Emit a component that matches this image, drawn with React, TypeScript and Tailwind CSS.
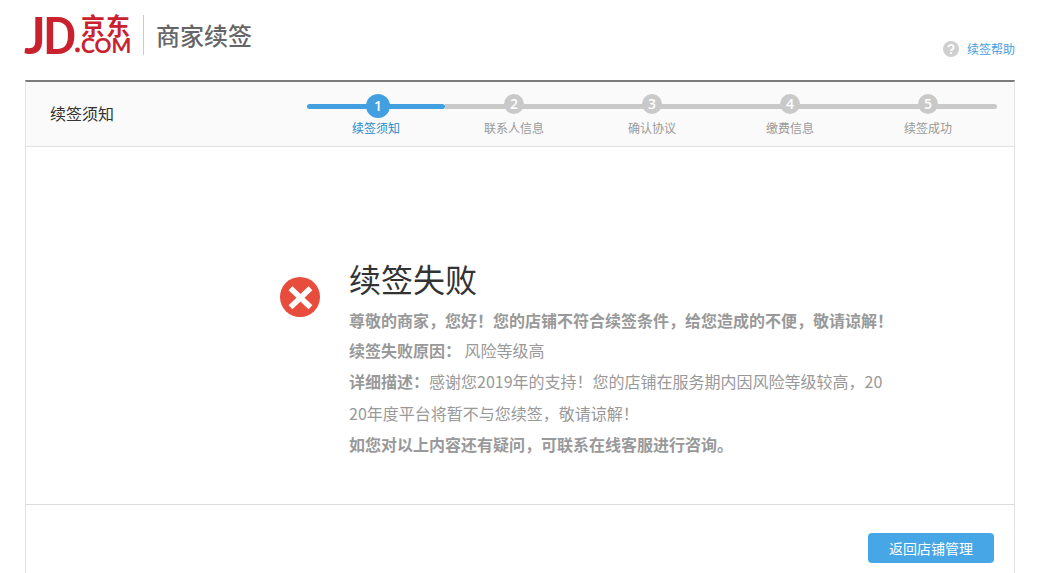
import * as React from 'react';
import clsx from 'clsx';

const steps = ['续签须知', '联系人信息', '确认协议', '缴费信息', '续签成功'];

function Logo() {
    return (
        <svg width="108" height="42" viewBox="0 0 108 42" role="img" aria-label="JD.COM 京东" className="shrink-0 overflow-visible fill-[#c9222e]">
            <text x="-1" y="39" fontFamily="Lato, sans-serif" fontSize="51" fontWeight="700">J</text>
            <text x="18" y="39" fontFamily="Roboto, sans-serif" fontSize="52" fontWeight="500">D</text>
            <circle cx="52.500" cy="35" r="2.400" />
            <text x="56" y="20" fontFamily="'Noto Sans CJK SC', sans-serif" fontSize="24" fontWeight="700">京</text>
            <text x="81" y="20" fontFamily="'Noto Sans CJK SC', sans-serif" fontSize="24" fontWeight="700">东</text>
            <text x="56" y="38" fontFamily="Lato, sans-serif" fontSize="21" fontWeight="700">COM</text>
        </svg>
    );
}

function HelpIcon() {
    return (
        <svg width="16" height="16" viewBox="0 0 16 16" aria-hidden="true">
            <circle cx="8" cy="8" r="8" fill="#cfcfcf" />
            <path d="M5.4 6.3a2.6 2.4 0 1 1 4 2C8.500 8.900 8 9.200 8 10.100" fill="none" stroke="#fff" strokeWidth="1.900" />
            <rect x="7" y="11.200" width="2" height="2" fill="#fff" />
        </svg>
    );
}

function FailIcon() {
    return (
        <svg width="40" height="40" viewBox="0 0 40 40" aria-hidden="true" className="mt-6 shrink-0">
            <circle cx="20" cy="20" r="20" fill="#e84c3d" />
            <path d="M10.500 11.200l20 19M30.500 11.200l-20 19" stroke="#fff" strokeWidth="5.600" />
        </svg>
    );
}

function Steps({ current }: { current: number }) {
    return (
        <ol className="grid w-[690px] grid-cols-5">
            {steps.map((label, i) => {
                const active = i === current;
                return (
                    <li key={label} className="relative flex h-12 flex-col items-center">
                        <span
                            className={clsx(
                                'absolute top-2.5 left-0 h-[5px] w-full',
                                i === 0 && 'rounded-l-sm',
                                i === steps.length - 1 && 'rounded-r-sm',
                                active ? 'rounded-r-sm bg-[#43a0e0]' : 'bg-[#c9c9c9]'
                            )}
                        />
                        <span
                            className={clsx(
                                'z-10 flex items-center justify-center rounded-full font-["Open_Sans",sans-serif] text-sm font-semibold text-white',
                                active ? 'ml-1 size-6 bg-[#43a0e0]' : 'size-5 bg-[#c9c9c9]'
                            )}
                        >
                            {i + 1}
                        </span>
                        <span className={clsx('absolute top-6 text-xs leading-5', active ? 'text-[#1f88cc]' : 'text-[#999]')}>
                            {label}
                        </span>
                    </li>
                );
            })}
        </ol>
    );
}

export default function App() {
    return (
        <div className="flex min-h-screen flex-col bg-white pr-[47px] pl-[25px] font-['Noto_Sans_CJK_SC',sans-serif] text-[#333]">
            <header className="flex h-20 items-start justify-between pt-[15px]">
                <div className="flex items-start">
                    <Logo />
                    <div className="ml-2.5 h-10 border-l border-[#ccc]" />
                    <h1 className="ml-3 text-2xl leading-10 font-medium text-[#666]">商家续签</h1>
                </div>
                <a href="#help" className="mt-6 flex items-center gap-2 text-xs leading-5 text-[#3fa0e0]">
                    <HelpIcon />
                    续签帮助
                </a>
            </header>

            <main className="flex flex-1 flex-col border-x border-t-2 border-x-[#e3e3e3] border-t-[#7b7b7b]">
                <div className="flex h-[65px] justify-between border-b border-[#e3e3e3] bg-[#fafafa] pr-[17px] pl-6">
                    <h2 className="text-base leading-[62px]">续签须知</h2>
                    <div className="pt-3">
                        <Steps current={0} />
                    </div>
                </div>

                <section className="flex gap-[29px] pt-[106px] pr-20 pb-[45px] pl-[254px]">
                    <FailIcon />
                    <div className="text-base text-[#999]">
                        <h3 className="pb-0.5 text-[32px] leading-[50px] text-[#333]">续签失败</h3>
                        <p className="leading-[30px] font-bold">
                            尊敬的商家，您好！您的店铺不符合续签条件，给您造成的不便，敬请谅解！
                        </p>
                        <p className="leading-[30px]">
                            <strong>续签失败原因：</strong> 风险等级高
                        </p>
                        <p className="max-w-[540px] leading-8 break-all">
                            <strong>详细描述：</strong>
                            感谢您2019年的支持！您的店铺在服务期内因风险等级较高，2020年度平台将暂不与您续签，敬请谅解！
                        </p>
                        <p className="leading-[30px] font-bold">如您对以上内容还有疑问，可联系在线客服进行咨询。</p>
                    </div>
                </section>

                <footer className="flex justify-end border-t border-[#dcdcdc] pt-7 pr-5 pb-2.5">
                    <button type="button" className="rounded bg-[#46a6e6] px-[21px] text-sm leading-[30px] text-white">
                        返回店铺管理
                    </button>
                </footer>
            </main>
        </div>
    );
}
